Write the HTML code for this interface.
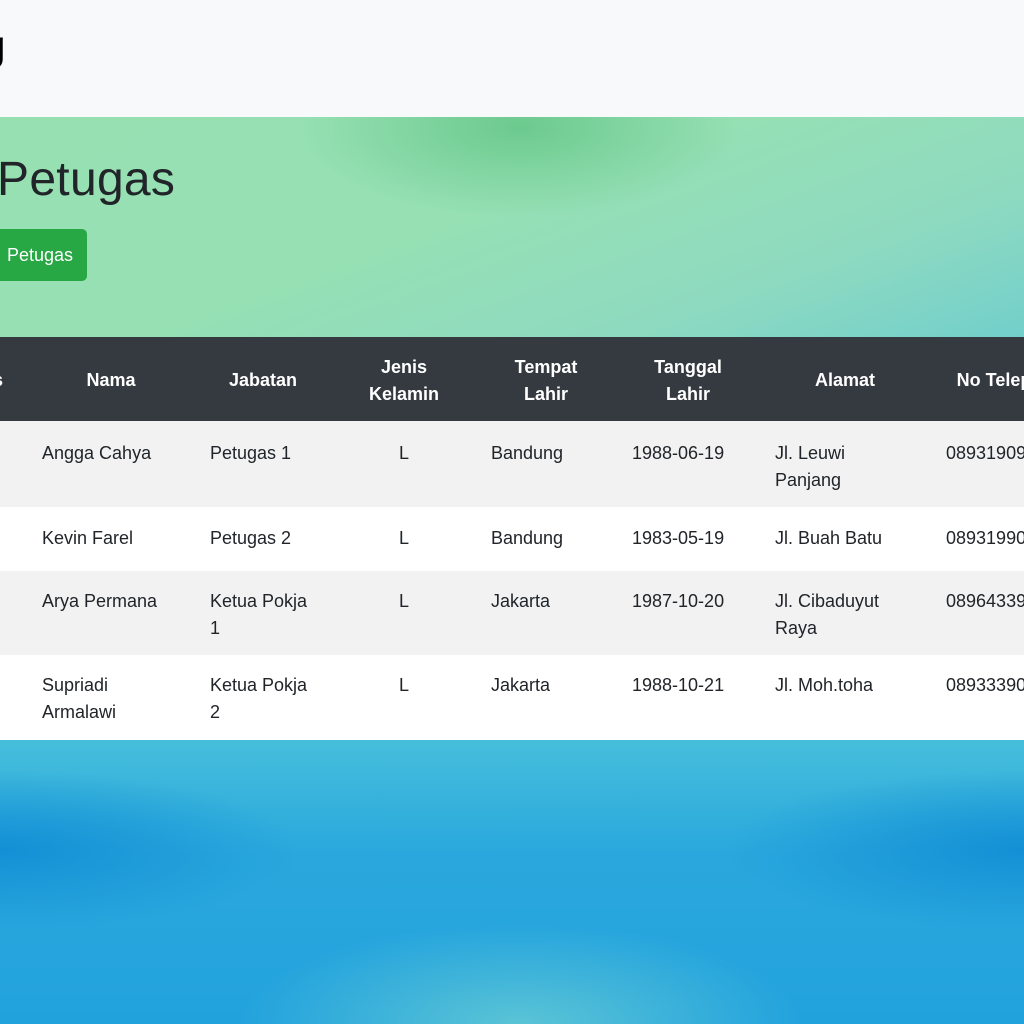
<!DOCTYPE html>
<html><head><meta charset="utf-8"><style>
*{margin:0;padding:0;box-sizing:border-box}
html,body{width:1024px;height:1024px;overflow:hidden}
body{font-family:"Liberation Sans",sans-serif;color:#212529;position:relative;
background:#22a5df}
.top{position:absolute;left:0;top:0;width:1024px;height:117px;background:#f8f9fa}
.brand{position:absolute;left:-20px;top:22px;font-size:42px;font-weight:bold;color:#000}
.green{position:absolute;left:0;top:117px;width:1024px;height:220px;
background:radial-gradient(ellipse 220px 90px at 520px 10px,#6cca8e,rgba(150,224,180,0) 100%),
linear-gradient(160deg,#96e0b2 0%,#96e0b4 45%,#8edac0 75%,#72cfcb 100%)}
.blue{position:absolute;left:0;top:740px;width:1024px;height:284px;
background:radial-gradient(ellipse 280px 100px at 520px 284px,#5ac4d6,rgba(34,165,223,0) 100%),
radial-gradient(ellipse 300px 80px at 0px 110px,#1390d5,rgba(34,165,223,0) 100%),
radial-gradient(ellipse 300px 80px at 1024px 110px,#1390d5,rgba(34,165,223,0) 100%),
linear-gradient(180deg,#46bedb 0%,#2aa8dd 40%,#22a2dd 100%)}
h1{position:absolute;left:-3px;top:152px;font-size:48px;font-weight:normal;color:#212529;letter-spacing:0.3px}
.btn{position:absolute;left:-10px;top:229px;width:97px;height:52px;background:#28a745;border-radius:5px;color:#fff;font-size:18px;padding:16px 0 0 17px}
.thead{position:absolute;left:0;top:337px;width:1024px;height:84px;background:#343a40}
.row{position:absolute;left:0;width:1024px}
.t{position:absolute;font-size:18px;line-height:27px;white-space:nowrap}
.h{position:absolute;color:#fff;font-weight:bold;font-size:18px;line-height:27px;text-align:center;transform:translateX(-50%);white-space:nowrap}
</style></head><body>
<div class="top"><div class="brand">g</div></div>
<div class="green"></div>
<h1>Petugas</h1>
<div class="btn">Petugas</div>
<div class="thead">
<div class="h" style="left:-2px;top:30px">s</div>
<div class="h" style="left:111px;top:30px">Nama</div>
<div class="h" style="left:263px;top:30px">Jabatan</div>
<div class="h" style="left:404px;top:17px">Jenis<br>Kelamin</div>
<div class="h" style="left:546px;top:17px">Tempat<br>Lahir</div>
<div class="h" style="left:688px;top:17px">Tanggal<br>Lahir</div>
<div class="h" style="left:845px;top:30px">Alamat</div>
<div class="h" style="left:1005px;top:30px">No Telepon</div>
</div>
<div class="row" style="top:421px;height:86px;background:#f2f2f2">
<div class="t" style="left:42px;top:19px">Angga Cahya</div>
<div class="t" style="left:210px;top:19px">Petugas 1</div>
<div class="t" style="left:399px;top:19px">L</div>
<div class="t" style="left:491px;top:19px">Bandung</div>
<div class="t" style="left:632px;top:19px">1988-06-19</div>
<div class="t" style="left:775px;top:19px">Jl. Leuwi<br>Panjang</div>
<div class="t" style="left:946px;top:19px">089319091</div>
</div>
<div class="row" style="top:507px;height:64px;background:#fff">
<div class="t" style="left:42px;top:18px">Kevin Farel</div>
<div class="t" style="left:210px;top:18px">Petugas 2</div>
<div class="t" style="left:399px;top:18px">L</div>
<div class="t" style="left:491px;top:18px">Bandung</div>
<div class="t" style="left:632px;top:18px">1983-05-19</div>
<div class="t" style="left:775px;top:18px">Jl. Buah Batu</div>
<div class="t" style="left:946px;top:18px">089319901</div>
</div>
<div class="row" style="top:571px;height:84px;background:#f2f2f2">
<div class="t" style="left:42px;top:17px">Arya Permana</div>
<div class="t" style="left:210px;top:17px">Ketua Pokja<br>1</div>
<div class="t" style="left:399px;top:17px">L</div>
<div class="t" style="left:491px;top:17px">Jakarta</div>
<div class="t" style="left:632px;top:17px">1987-10-20</div>
<div class="t" style="left:775px;top:17px">Jl. Cibaduyut<br>Raya</div>
<div class="t" style="left:946px;top:17px">089643391</div>
</div>
<div class="row" style="top:655px;height:85px;background:#fff">
<div class="t" style="left:42px;top:17px">Supriadi<br>Armalawi</div>
<div class="t" style="left:210px;top:17px">Ketua Pokja<br>2</div>
<div class="t" style="left:399px;top:17px">L</div>
<div class="t" style="left:491px;top:17px">Jakarta</div>
<div class="t" style="left:632px;top:17px">1988-10-21</div>
<div class="t" style="left:775px;top:17px">Jl. Moh.toha</div>
<div class="t" style="left:946px;top:17px">089333901</div>
</div>
<div class="blue"></div>
</body></html>
